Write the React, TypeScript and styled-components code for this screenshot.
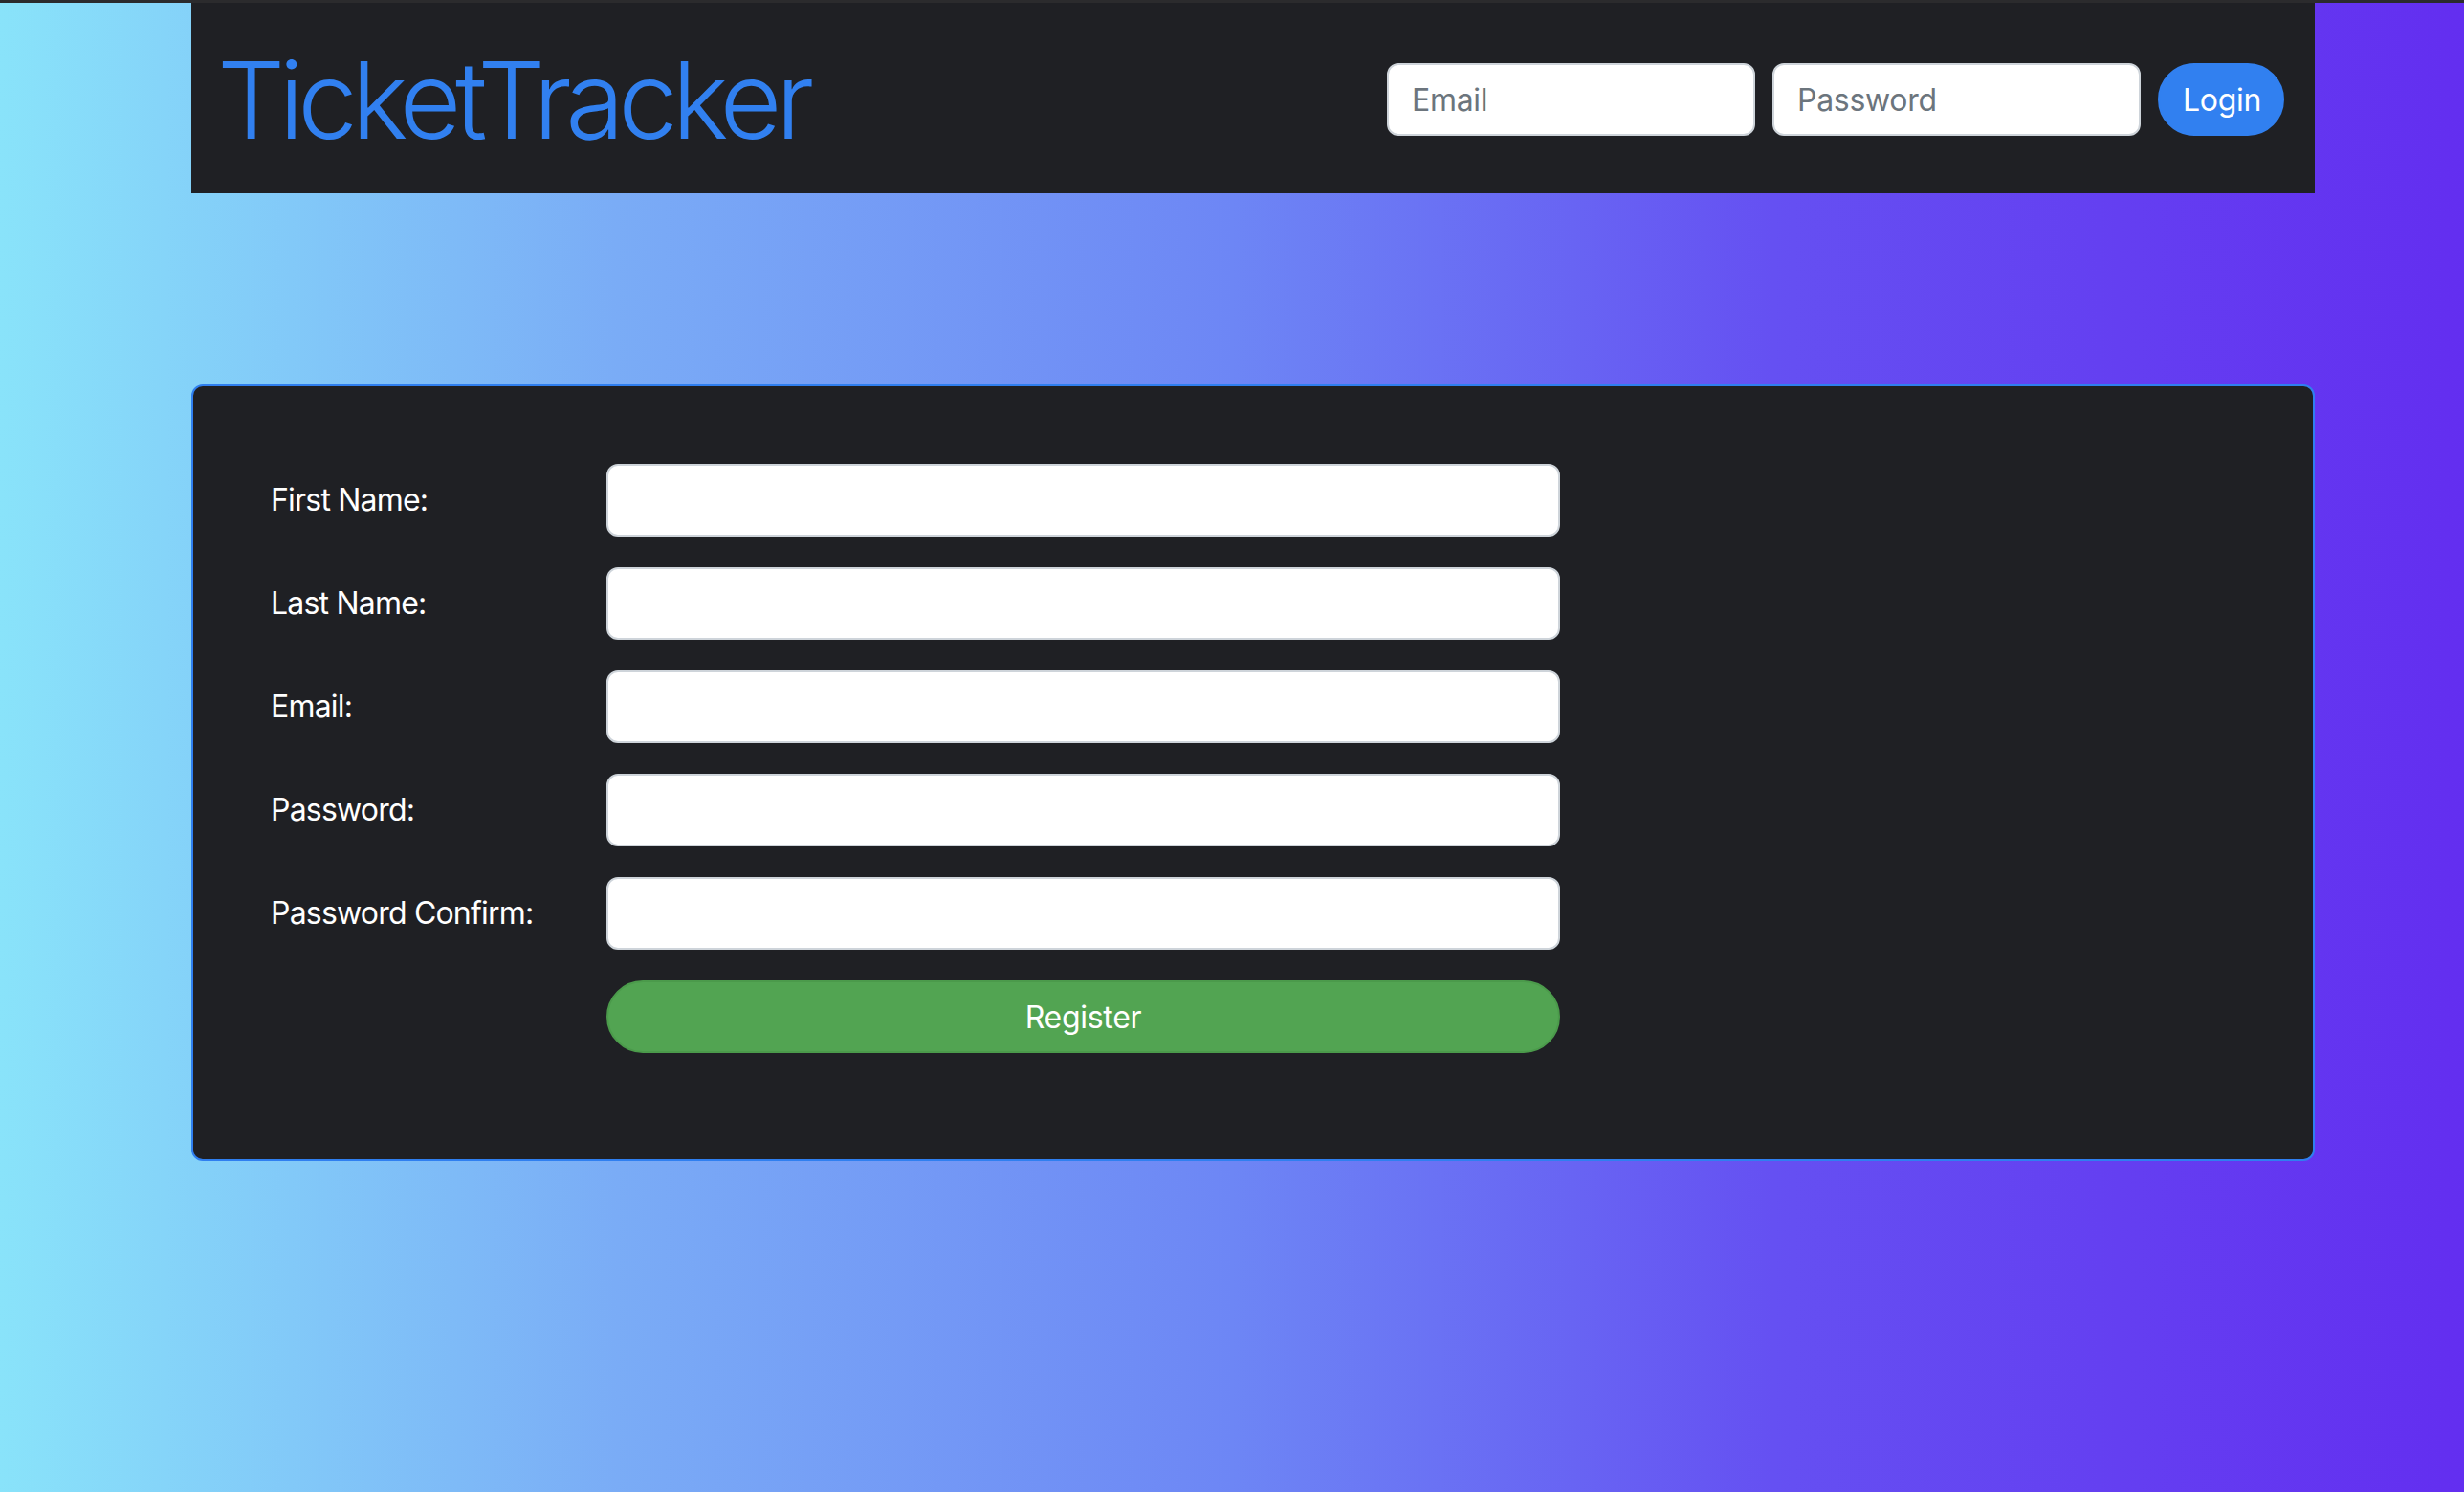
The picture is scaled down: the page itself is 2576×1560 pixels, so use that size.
import React from "react";
import styled, { createGlobalStyle } from "styled-components";

const GlobalStyle = createGlobalStyle`
  * { box-sizing: border-box; }
  html, body { margin: 0; padding: 0; }
  body {
    font-family: Inter, "Liberation Sans", Arial, sans-serif;
    background: linear-gradient(90deg, #89e3fa 0%, #7aacf6 25%, #6d86f5 50%, #6550f2 72%, #632ef0 100%);
    min-height: 1560px;
  }
`;

const TopEdge = styled.div`
  height: 3px;
  background: #2b2b2d;
`;

const Page = styled.div`
  display: flex;
  flex-direction: column;
  gap: 200px;
  padding: 0 156px 0 200px;
  min-height: 1557px;
`;

const Header = styled.header`
  display: flex;
  align-items: center;
  justify-content: space-between;
  height: 199px;
  background: #1f2024;
  padding: 3px 32px 0 27px;
`;

const Brand = styled.h1`
  margin: 0;
  font-family: Inter, "Liberation Sans", sans-serif;
  font-weight: 300;
  font-size: 112px;
  line-height: 1.2;
  letter-spacing: -6.5px;
  color: #3180f0;
`;

const LoginForm = styled.form`
  display: flex;
  align-items: center;
  gap: 18px;
`;

const HeaderInput = styled.input`
  width: 385px;
  height: 76px;
  border: 2px solid #ced4da;
  border-radius: 12px;
  background: #fff;
  padding: 0 24px;
  font-family: Inter, "Liberation Sans", sans-serif;
  font-size: 32px;
  letter-spacing: -0.3px;
  color: #212529;
  outline: none;
  &::placeholder { color: #6c757d; }
`;

const PillButton = styled.button<{ $bg: string; $border: string; $width?: string }>`
  height: 76px;
  width: ${(p) => p.$width ?? "auto"};
  padding: 0 24px;
  border: 2px solid ${(p) => p.$border};
  border-radius: 40px;
  background: ${(p) => p.$bg};
  color: #fff;
  font-family: Inter, "Liberation Sans", sans-serif;
  font-size: 32px;
  font-weight: 400;
  letter-spacing: -0.3px;
  cursor: pointer;
`;

const Card = styled.section`
  border: 2px solid #2f7ff0;
  border-radius: 12px;
  background: #1f2024;
  padding: 81px 81px 111px 81px;
`;

const FormGrid = styled.div`
  display: grid;
  grid-template-columns: 351px 997px;
  row-gap: 32px;
  align-items: center;
`;

const Label = styled.label`
  color: #ffffff;
  font-size: 32px;
  letter-spacing: -0.8px;
  line-height: 1.5;
`;

const FieldInput = styled.input`
  height: 76px;
  width: 997px;
  border: 2px solid #ced4da;
  border-radius: 12px;
  background: #fff;
  padding: 0 24px;
  font-size: 32px;
  outline: none;
`;

const Spacer = styled.div``;

const fields = [
  { id: "first", label: "First Name:", type: "text" },
  { id: "last", label: "Last Name:", type: "text" },
  { id: "email", label: "Email:", type: "email" },
  { id: "password", label: "Password:", type: "password" },
  { id: "confirm", label: "Password Confirm:", type: "password" },
];

export default function App() {
  return (
    <>
      <GlobalStyle />
      <TopEdge />
      <Page>
        <Header>
          <Brand>TicketTracker</Brand>
          <LoginForm onSubmit={(e) => e.preventDefault()}>
            <HeaderInput type="email" placeholder="Email" />
            <HeaderInput type="password" placeholder="Password" />
            <PillButton $bg="#3180f0" $border="#3180f0" $width="132px">
              Login
            </PillButton>
          </LoginForm>
        </Header>
        <Card>
          <FormGrid>
            {fields.map((f) => (
              <React.Fragment key={f.id}>
                <Label htmlFor={f.id}>{f.label}</Label>
                <FieldInput id={f.id} type={f.type} />
              </React.Fragment>
            ))}
            <Spacer />
            <PillButton $bg="#52a452" $border="#4b9a4b" $width="997px">
              Register
            </PillButton>
          </FormGrid>
        </Card>
      </Page>
    </>
  );
}
